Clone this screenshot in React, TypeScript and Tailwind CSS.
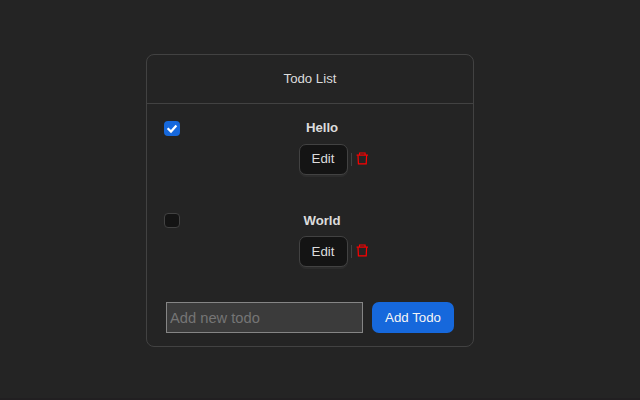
import React from "react";

function TrashIcon() {
  return (
    <svg className="mb-[2px] ml-[4px]" width="13" height="13" viewBox="0 0 13 13" fill="none" stroke="#ff0000">
      <path d="M0.6 3.1H12" strokeWidth="1.2" />
      <path d="M3.5 3V1H9.1V3" strokeWidth="1.1" />
      <path d="M2 3.2L2.4 11.9H10.2L10.6 3.2" strokeWidth="1.2" />
    </svg>
  );
}

function Checkbox({ checked }: { checked: boolean }) {
  return checked ? (
    <span className="ml-[17px] mt-[17px] flex h-[15px] w-4 shrink-0 items-center justify-center rounded-[4px] bg-[#1668dc]">
      <svg width="16" height="15" viewBox="0 0 16 15" fill="none">
        <path d="M3.6 7.2L7 10.6L12.4 4.6" stroke="#fff" strokeWidth="2.2" />
      </svg>
    </span>
  ) : (
    <span className="ml-[17px] mt-[17px] h-[15px] w-4 shrink-0 rounded-[4px] border border-[#424242] bg-[#141414]" />
  );
}

function Todo({ title, checked }: { title: string; checked: boolean }) {
  return (
    <div className={checked ? "flex h-[92px]" : "flex h-[93px]"}>
      <Checkbox checked={checked} />
      <div className={checked ? "ml-[119px] pt-[13px]" : "ml-[119px] pt-[14px]"}>
        <div className="w-[46px] text-center text-[13.2px] font-bold leading-[21px]">{title}</div>
        <div className={checked ? "mt-[6px] flex items-center" : "mt-[5px] flex items-center"}>
          <button
            className={`h-[31px] w-[49px] rounded-[7px] border border-[#424242] bg-[#141414] pr-[7px] text-[13.3px] leading-none shadow-[0_2px_0_rgba(255,255,255,0.04)] ${checked ? "pb-[2px]" : ""} pl-[6px]`}
          >
            Edit
          </button>
          <span className="ml-[3px] h-[13px] w-px bg-[#424242]" />
          <TrashIcon />
        </div>
      </div>
    </div>
  );
}

export default function App() {
  return (
    <div className="flex h-[400px] w-[640px] items-start border-b-2 border-[#211f21] bg-[#242424] pl-[146px] pt-[54px] font-['Liberation_Sans',sans-serif] text-[#dcdcdc]">
      <div className="h-[293px] w-[328px] rounded-[8px] border border-[#424242]">
        <div className="flex h-[49px] items-center justify-center border-b border-[#424242] text-[13.2px]">
          Todo List
        </div>
        <Todo title="Hello" checked />
        <Todo title="World" checked={false} />
        <div className="ml-[19px] mt-[13px] flex gap-[9px]">
          <input
            placeholder="Add new todo"
            className="h-[31px] w-[197px] border border-[#858585] bg-[#3b3b3b] px-[3px] text-[14.7px] placeholder:text-[#757575]"
          />
          <button className="h-[31px] w-[82px] rounded-[7px] bg-[#1668dc] text-[13.3px] text-[#f5f5f5]">Add Todo</button>
        </div>
      </div>
    </div>
  );
}
